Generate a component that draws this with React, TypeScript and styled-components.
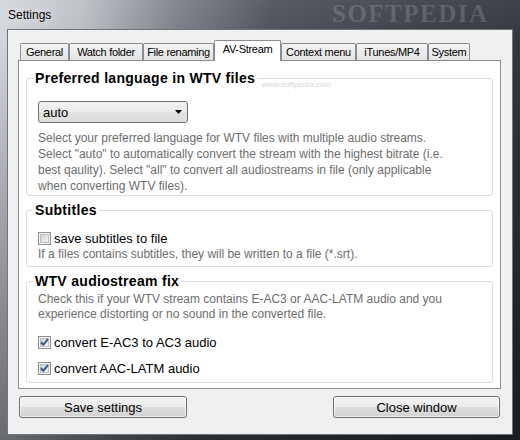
import styled, { createGlobalStyle } from "styled-components";

const GlobalStyle = createGlobalStyle`
  html, body {
    margin: 0;
    padding: 0;
    background: #2b2f34;
  }
  body {
    font-family: "Liberation Sans", Arial, sans-serif;
  }
`;

const Window = styled.div`
  position: relative;
  width: 520px;
  height: 440px;
  display: flex;
  flex-direction: column;
  overflow: hidden;
  background:
    linear-gradient(180deg, rgba(255, 255, 255, 0.06) 0%, rgba(0, 0, 0, 0) 10%, rgba(0, 0, 0, 0.45) 100%),
    linear-gradient(100deg, #d5d8dc 0%, #bcc0c5 14%, #7c8188 30%, #4d525a 46%, #3c4047 70%, #2e3238 100%);
`;

const TitleBar = styled.div`
  flex: none;
  height: 29px;
  display: flex;
  align-items: center;
  padding-left: 8px;
  font-size: 12px;
  color: #000;
  text-shadow: 0 0 8px rgba(255, 255, 255, 0.9);
`;

const Watermark = styled.span`
  position: absolute;
  left: 332px;
  top: 1px;
  font-family: "Liberation Serif", "Times New Roman", serif;
  font-weight: bold;
  font-size: 25px;
  line-height: 26px;
  letter-spacing: 1.5px;
  color: rgba(255, 255, 255, 0.16);
  pointer-events: none;
  white-space: nowrap;
`;

const SmallMark = styled.span`
  position: absolute;
  left: 262px;
  top: 80px;
  font-size: 8px;
  color: #d8d8d8;
  pointer-events: none;
`;

const Client = styled.div`
  flex: 1;
  min-height: 0;
  margin: 0 7px 5px;
  background: #f0f0f0;
  border: 1px solid #6f757c;
  padding: 10px 11px 0 10px;
  display: flex;
  flex-direction: column;
`;

const TabStrip = styled.div`
  height: 20px;
  display: flex;
  align-items: flex-end;
  padding-left: 2px;
`;

const Tab = styled.div<{ $w: number; $active?: boolean }>`
  box-sizing: border-box;
  width: ${(p) => p.$w}px;
  height: ${(p) => (p.$active ? 21 : 17)}px;
  margin-bottom: ${(p) => (p.$active ? -1 : 0)}px;
  position: relative;
  z-index: ${(p) => (p.$active ? 2 : 1)};
  border: 1px solid #898c95;
  border-bottom: none;
  border-radius: 2px 2px 0 0;
  background: ${(p) => (p.$active ? "#fff" : "linear-gradient(#f3f3f3, #e4e4e4)")};
  display: flex;
  justify-content: center;
  align-items: ${(p) => (p.$active ? "flex-start" : "center")};
  padding-top: ${(p) => (p.$active ? 2 : 0)}px;
  font-size: 11px;
  letter-spacing: -0.3px;
  color: #000;
  white-space: nowrap;
  overflow: hidden;
`;

const Panel = styled.div`
  box-sizing: border-box;
  height: 329px;
  background: #fff;
  border: 1px solid #898c95;
  padding: 9px 7px 5px;
  display: flex;
  flex-direction: column;
  gap: 6px;
`;

const Group = styled.fieldset<{ $grow?: boolean; $pb: number }>`
  margin: 0;
  min-width: 0;
  padding: 0 11px ${(p) => p.$pb}px;
  border: 1px solid #d5dfe5;
  border-radius: 3px;
  ${(p) => (p.$grow ? "flex: 1;" : "")}
`;

const Legend = styled.legend`
  margin-left: -5px;
  padding: 0 2px;
  font-size: 14px;
  font-weight: bold;
  line-height: 17px;
  letter-spacing: 0.3px;
  color: #000;
`;

const Select = styled.div`
  box-sizing: border-box;
  width: 150px;
  height: 22px;
  margin-top: 14px;
  border: 1px solid #707070;
  border-radius: 3px;
  background: linear-gradient(#f2f2f2 0%, #ebebeb 50%, #e2e2e2 51%, #dcdcdc 100%);
  display: flex;
  align-items: center;
  justify-content: space-between;
  padding: 0 5px 0 4px;
  font-size: 13px;
  color: #000;
`;

const Desc = styled.p<{ $mt?: number; $lh?: number }>`
  margin: ${(p) => p.$mt ?? 0}px 0 0;
  font-size: 12px;
  line-height: ${(p) => p.$lh ?? 16}px;
  color: #6d6d6d;
`;

const CheckRow = styled.label<{ $mt: number }>`
  display: flex;
  align-items: center;
  gap: 3px;
  height: 16px;
  margin-top: ${(p) => p.$mt}px;
  font-size: 13px;
  color: #000;
`;

const Footer = styled.div`
  display: flex;
  justify-content: space-between;
  margin-top: 7px;
  padding: 0 1px;
`;

const Button = styled.button<{ $w: number }>`
  box-sizing: border-box;
  width: ${(p) => p.$w}px;
  height: 22px;
  border: 1px solid #707070;
  border-radius: 3px;
  background: linear-gradient(#f4f4f4 0%, #ececec 48%, #dedede 52%, #d2d2d2 100%);
  box-shadow: inset 0 0 0 1px rgba(255, 255, 255, 0.6);
  font-family: "Liberation Sans", Arial, sans-serif;
  font-size: 13px;
  color: #000;
  padding: 0;
`;

function CheckBox({ checked }: { checked?: boolean }) {
  const id = checked ? "cbOn" : "cbOff";
  return (
    <svg width="13" height="13" viewBox="0 0 13 13">
      <defs>
        <linearGradient id={id} x1="0" y1="0" x2="1" y2="1">
          <stop offset="0" stopColor="#cbcfd5" />
          <stop offset="1" stopColor="#f7f7f7" />
        </linearGradient>
      </defs>
      <rect x="0.5" y="0.5" width="12" height="12" fill="#f4f4f4" stroke="#8e8f8f" />
      <rect x="2.5" y="2.5" width="8" height="8" fill={`url(#${id})`} stroke="#b2b5ba" strokeWidth="0.8" />
      {checked && (
        <path d="M3 6.3 L5.3 8.8 L10 3.2" fill="none" stroke="#3d5896" strokeWidth="2" strokeLinejoin="round" />
      )}
    </svg>
  );
}

const tabs = [
  { label: "General", w: 49 },
  { label: "Watch folder", w: 74 },
  { label: "File renaming", w: 71 },
  { label: "AV-Stream", w: 67, active: true },
  { label: "Context menu", w: 75 },
  { label: "iTunes/MP4", w: 72 },
  { label: "System", w: 42 },
];

export default function App() {
  return (
    <>
      <GlobalStyle />
      <Window>
        <TitleBar>Settings</TitleBar>
        <Watermark>SOFTPEDIA</Watermark>

        <Client>
          <TabStrip>
            {tabs.map((t) => (
              <Tab key={t.label} $w={t.w} $active={t.active}>
                {t.label}
              </Tab>
            ))}
          </TabStrip>

          <Panel>
            <Group $pb={1}>
              <Legend>Preferred language in WTV files</Legend>
              <Select>
                <span>auto</span>
                <svg width="7" height="4" viewBox="0 0 7 4">
                  <path d="M0 0 H7 L3.5 4 Z" fill="#000" />
                </svg>
              </Select>
              <Desc $mt={7}>
                Select your preferred language for WTV files with multiple audio streams.
                <br />
                Select "auto" to automatically convert the stream with the highest bitrate (i.e.
                <br />
                best qaulity). Select "all" to convert all audiostreams in file (only applicable
                <br />
                when converting WTV files).
              </Desc>
            </Group>

            <Group $pb={4}>
              <Legend>Subtitles</Legend>
              <CheckRow $mt={11}>
                <CheckBox />
                save subtitles to file
              </CheckRow>
              <Desc>If a files contains subtitles, they will be written to a file (*.srt).</Desc>
            </Group>

            <Group $grow $pb={0}>
              <Legend>WTV audiostream fix</Legend>
              <Desc $mt={2} $lh={15}>
                Check this if your WTV stream contains E-AC3 or AAC-LATM audio and you
                <br />
                experience distorting or no sound in the converted file.
              </Desc>
              <CheckRow $mt={12}>
                <CheckBox checked />
                convert E-AC3 to AC3 audio
              </CheckRow>
              <CheckRow $mt={10}>
                <CheckBox checked />
                convert AAC-LATM audio
              </CheckRow>
            </Group>
          </Panel>

          <Footer>
            <Button $w={168}>Save settings</Button>
            <Button $w={167}>Close window</Button>
          </Footer>
        </Client>

        <SmallMark>www.softpedia.com</SmallMark>
      </Window>
    </>
  );
}
